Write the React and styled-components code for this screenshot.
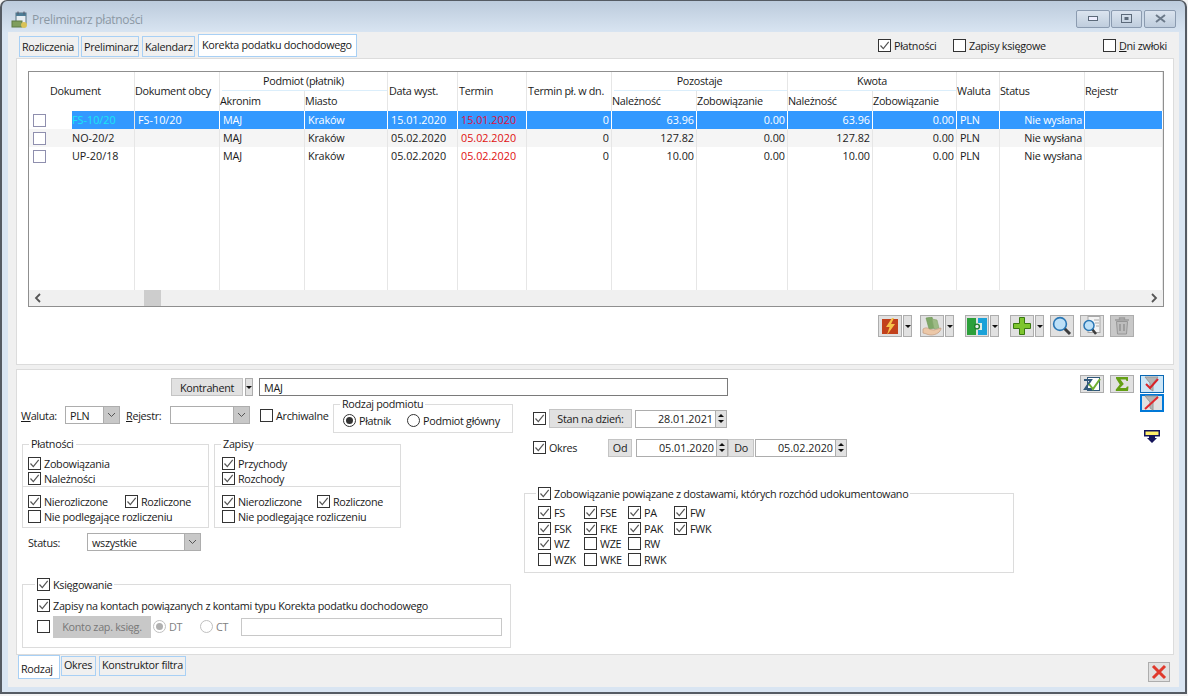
import React from 'react';
import styled, { createGlobalStyle } from 'styled-components';

const GlobalStyle = createGlobalStyle`
  html, body { margin: 0; padding: 0; background: #f3f3f3; }
  body { font-family: "Open Sans", "Noto Sans", sans-serif; font-size: 10.8px; letter-spacing: -0.3px; color: #1a1a1a; }
  * { box-sizing: border-box; }
`;

const Frame = styled.div`
  width: 1187px;
  height: 694px;
  padding: 0 6px 7px;
  background: linear-gradient(180deg, #bccbdc 0, #d9e5f2 32px, #d9e5f2 100%);
  border: 1px solid #555b63;
  border-width: 1px 2px 2px 2px;
  border-radius: 7px 7px 0 0;
  overflow: hidden;
`;
const TitleBar = styled.div`
  height: 31px;
  display: flex;
  align-items: center;
  padding: 6px 3px 0 3px;
  color: #8b98a4;
  font-size: 12px;
`;
const TitleText = styled.span`
  margin-left: 3px;
  flex: 1;
`;
const WinBtn = styled.div`
  width: ${p => p.$w}px;
  height: 18px;
  margin-left: ${p => p.$ml}px;
  margin-bottom: 2px;
  border: 1px solid #8b9bb0;
  border-radius: 2px;
  background: linear-gradient(180deg, #dbe4ef, #bfcddd);
  display: flex;
  align-items: center;
  justify-content: center;
`;
const Content = styled.div`
  height: 655px;
  background: #f0f0f0;
  padding: 2px 5px 0 8px;
  display: flex;
  flex-direction: column;
`;
const TopRow = styled.div`
  height: 24px;
  display: flex;
  align-items: flex-end;
  padding-left: 3px;
  padding-bottom: 1px;
`;
const Tab = styled.div`
  height: ${p => (p.$active ? 23 : 21)}px;
  width: ${p => p.$w}px;
  padding: ${p => (p.$active ? '0 0 3px 3px' : '0 0 0 2px')};
  margin-right: ${p => p.$mr ?? 2}px;
  border: 1px solid #a8d0f5;
  background: ${p => (p.$active ? '#fff' : '#f0f0f0')};
  display: flex;
  align-items: center;
  white-space: nowrap;
`;
const TopChecks = styled.div`
  margin-left: auto;
  align-self: flex-start;
  display: flex;
  height: 20px;
  padding-top: 4px;
`;
const Panel = styled.div`
  background: #fff;
  border: 1px solid #dcdcdc;
`;
const GridPanel = styled(Panel)`
  height: 307px;
  padding: 12px 9px 0 11px;
`;
const Table = styled.div`
  height: 236px;
  border: 1px solid #8f8f8f;
  display: grid;
  grid-template-columns: 106px 85px 85px 83px 70px 69px 85px 85px 91px 85px 84px 43px 85px 1fr;
  grid-template-rows: 19px 20px 18px 18px 18px 1fr 16px;
`;
const HeadCell = styled.div`
  grid-row: ${p => p.$row};
  grid-column: ${p => p.$col};
  border-right: 1px solid #e6e6e6;
  display: flex;
  align-items: center;
  padding: 0 0 2px ${p => p.$pad || 0}px;
  justify-content: ${p => (p.$center ? 'center' : 'flex-start')};
  white-space: nowrap;
  position: relative;
`;
const GroupHead = styled(HeadCell)`
  &::after {
    content: '';
    position: absolute;
    left: 2px;
    right: 0;
    bottom: 0;
    height: 1px;
    background: #dbeefb;
  }
`;
const Row = styled.div`
  display: contents;
`;
const Cell = styled.div`
  height: 18px;
  display: flex;
  align-items: center;
  justify-content: ${p => (p.$right ? 'flex-end' : 'flex-start')};
  padding: 0 2px 1px ${p => (p.$right ? 0 : 3)}px;
  border-right: 1px solid ${p => (p.$sel ? '#fff' : '#e6e6e6')};
  background: ${p => (p.$sel ? '#3399ff' : p.$alt ? '#f5f5f5' : '#fff')};
  color: ${p => p.$color || (p.$sel ? '#fff' : '#1a1a1a')};
  letter-spacing: ${p => (p.$num ? '0' : '-0.2px')};
  white-space: nowrap;
`;
const DocCell = styled.div`
  height: 18px;
  display: flex;
  align-items: center;
  padding-left: 4px;
  border-right: 1px solid #e6e6e6;
  background: ${p => (p.$alt ? '#f5f5f5' : '#fff')};
`;
const DocValue = styled.div`
  flex: 1;
  height: 18px;
  margin-left: 23px;
  padding-bottom: 1px;
  display: flex;
  align-items: center;
  letter-spacing: 0;
  background: ${p => (p.$sel ? '#3399ff' : 'transparent')};
  color: ${p => (p.$sel ? '#19e6f5' : '#1a1a1a')};
`;
const Filler = styled.div`
  border-right: 1px solid #e6e6e6;
`;
const ScrollBar = styled.div`
  grid-column: 1 / -1;
  background: #f0f0f0;
  display: flex;
  align-items: center;
  justify-content: space-between;
  padding: 0 5px 1px;
  position: relative;
`;
const Thumb = styled.div`
  position: absolute;
  left: 115px;
  top: 0;
  width: 17px;
  height: 16px;
  background: #cdcdcd;
`;
const Toolbar = styled.div`
  display: flex;
  justify-content: flex-end;
  padding: 8px 30px 0 0;
`;
const IconBtn = styled.div`
  width: 24px;
  height: ${p => p.$h || 22}px;
  border: 1px solid #adadad;
  background: ${p => (p.$off ? '#c8c8c8' : '#e1e1e1')};
  display: flex;
  align-items: center;
  justify-content: center;
  margin-left: ${p => p.$ml || 0}px;
`;
const ArrowBtn = styled.div`
  width: 9px;
  height: 22px;
  margin: 0 ${p => p.$mr || 0}px 0 1px;
  border: 1px solid #adadad;
  background: #e1e1e1;
  display: flex;
  align-items: center;
  justify-content: center;
  &::after {
    content: '';
    border: 3px solid transparent;
    border-top-color: #111;
    border-bottom: 0;
  }
`;
const FilterPanel = styled(Panel)`
  margin-top: 4px;
  height: 286px;
  display: flex;
`;
const FilterMain = styled.div`
  flex: 1;
  display: flex;
  flex-direction: column;
`;
const ContractorRow = styled.div`
  display: flex;
  align-items: center;
  padding: 8px 0 0 154px;
  width: 711px;
`;
const GrayBtn = styled.div`
  height: ${p => p.$h || 18}px;
  width: ${p => p.$w}px;
  flex: none;
  background: ${p => (p.$off ? '#c8c8c8' : '#e1e1e1')};
  color: ${p => (p.$off ? '#777' : '#1a1a1a')};
  border: 1px solid ${p => (p.$off ? '#c8c8c8' : '#c4c4c4')};
  display: flex;
  align-items: center;
  justify-content: center;
  white-space: nowrap;
`;
const SmallArrow = styled(ArrowBtn)`
  width: 8px;
  height: 18px;
  margin: 0 6px 0 2px;
`;
const TextBox = styled.div`
  height: ${p => p.$h || 18}px;
  flex: 1;
  border: 1px solid ${p => (p.$off ? '#c8c8c8' : '#7a7a7a')};
  padding-left: 4px;
  display: flex;
  align-items: center;
`;
const FilterCols = styled.div`
  display: flex;
`;
const LeftCol = styled.div`
  width: 507px;
  padding-left: 4px;
`;
const MidCol = styled.div`
  flex: 1;
  padding: 13px 0 0 0;
`;
const CurrencyRow = styled.div`
  height: 38px;
  display: flex;
  align-items: center;
`;
const FieldLabel = styled.span`
  width: ${p => p.$w}px;
  margin-left: ${p => p.$ml || 0}px;
  flex: none;
`;
const Under = styled.span`
  text-decoration: underline;
`;
const SelectBox = styled.div`
  width: ${p => p.$w}px;
  height: 18px;
  flex: none;
  border: 1px solid #adadad;
  padding-left: 4px;
  display: flex;
  align-items: center;
`;
const SelectArrow = styled.div`
  width: 16px;
  height: 16px;
  margin-left: auto;
  background: #c8c8c8;
  border-left: 1px solid #adadad;
  display: flex;
  align-items: center;
  justify-content: center;
`;
const Box = styled.fieldset`
  margin: ${p => p.$m || 0};
  padding: 0;
  border: 1px solid #dcdcdc;
  width: ${p => p.$w}px;
  height: ${p => p.$h}px;
  flex: none;
  min-width: 0;
  align-self: flex-start;
`;
const BoxLegend = styled.legend`
  padding: 0 2px;
  margin-left: ${p => p.$ml || 6}px;
  display: flex;
  align-items: center;
  line-height: 14px;
`;
const KindRow = styled.div`
  display: flex;
  padding: 2px 0 0 9px;
`;
const CheckLine = styled.label`
  display: inline-flex;
  align-items: center;
  height: ${p => p.$h || 15}px;
  width: ${p => (p.$w ? p.$w + 'px' : 'auto')};
  margin-left: ${p => p.$ml || 0}px;
  white-space: nowrap;
  flex: none;
  color: ${p => (p.$off ? '#808080' : 'inherit')};
`;
const CheckBox = styled.span`
  width: 13px;
  height: 13px;
  flex: none;
  border: 1px solid ${p => (p.$soft ? '#8f8fae' : '#333')};
  background: #fff;
  margin-right: 3px;
  display: flex;
  align-items: center;
  justify-content: center;
`;
const Radio = styled.span`
  width: 13px;
  height: 13px;
  flex: none;
  border-radius: 50%;
  border: 1px solid ${p => (p.$off ? '#c0c0c0' : '#333')};
  margin-right: 3px;
  display: flex;
  align-items: center;
  justify-content: center;
  &::after {
    content: '';
    width: 7px;
    height: 7px;
    border-radius: 50%;
    background: ${p => (p.$on ? (p.$off ? '#b0b0b0' : '#333') : 'transparent')};
  }
`;
const GroupsRow = styled.div`
  display: flex;
  gap: 5px;
  margin: 3px 0 0 1px;
`;
const BoxSection = styled.div`
  display: flex;
  flex-wrap: wrap;
  padding: ${p => p.$pad};
  border-bottom: ${p => (p.$line ? '1px solid #dcdcdc' : '0')};
`;
const StatusRow = styled.div`
  display: flex;
  align-items: center;
  margin-top: 5px;
  padding-left: 7px;
`;
const PostingRow = styled.div`
  display: flex;
  align-items: center;
  padding: ${p => p.$top || 0}px 0 0 14px;
  height: ${p => p.$h}px;
`;
const DateRow = styled.div`
  display: flex;
  align-items: center;
  height: 19px;
  margin-bottom: ${p => p.$mb || 0}px;
  padding-left: 9px;
`;
const DateField = styled.div`
  width: 92px;
  height: 18px;
  flex: none;
  margin: 0 ${p => p.$mr || 0}px 0 ${p => p.$ml || 0}px;
  border: 1px solid #adadad;
  display: flex;
  align-items: center;
  justify-content: flex-end;
  letter-spacing: 0;
`;
const Spinner = styled.div`
  width: 11px;
  height: 16px;
  margin: 0 0 0 2px;
  background: #e1e1e1;
  border-left: 1px solid #adadad;
  display: flex;
  flex-direction: column;
  align-items: center;
  justify-content: space-around;
  padding: 2px 0;
`;
const SpinUp = styled.i`
  border: 3px solid transparent;
  border-bottom-color: #111;
  border-top: 0;
`;
const SpinDown = styled.i`
  border: 3px solid transparent;
  border-top-color: #111;
  border-bottom: 0;
`;
const DocGrid = styled.div`
  display: grid;
  grid-template-columns: 46px 44px 46px 60px;
  grid-auto-rows: 15.6px;
  padding: 4px 0 0 13px;
`;
const SideTools = styled.div`
  width: 93px;
  flex: none;
  padding: 5px 0 0 0;
  display: grid;
  grid-template-columns: 24px 24px 24px;
  column-gap: 6px;
  grid-auto-rows: min-content;
`;
const ToolBtn = styled(IconBtn)`
  height: 18px;
  ${p => p.$blue && `border: 1px solid #0a68b4; background: #cde6f7;`}
  ${p => p.$focus && `border: 2px solid #0078d7; background: #e1e1e1; margin-top: 1px;`}
`;
const Marker = styled.div`
  grid-column: 3;
  margin-top: 18px;
  display: flex;
  justify-content: center;
`;
const BottomRow = styled.div`
  height: 32px;
  display: flex;
  align-items: flex-start;
  padding-left: 2px;
`;
const BottomTab = styled(Tab)`
  height: ${p => (p.$active ? 24 : 20)}px;
  margin-top: ${p => (p.$active ? 0 : 1)}px;
  padding: ${p => (p.$active ? '2px 0 0 2px' : '0 0 3px 2px')};
`;
const CloseBtn = styled(IconBtn)`
  margin: 7px 4px 0 auto;
  width: 22px;
  height: 20px;
  background: #e1e1e1;
`;

const columns = [
  ['Dokument', 1, 21],
  ['Dokument obcy', 2, 0],
  ['Data wyst.', 5, 1],
  ['Termin', 6, 1],
  ['Termin pł. w dn.', 7, 1],
  ['Waluta', 12, 0],
  ['Status', 13, 0],
  ['Rejestr', 14, 0],
];
const rows = [
  ['FS-10/20', 'FS-10/20', '15.01.2020', '63.96'],
  ['NO-20/2', '', '05.02.2020', '127.82'],
  ['UP-20/18', '', '05.02.2020', '10.00'],
];

const Tick = () => (
  <svg width="11" height="11" viewBox="0 0 11 11">
    <path d="M1.5 5.5 L4.3 8.6 L9.7 1.8" fill="none" stroke="#555" strokeWidth="1.2" />
  </svg>
);
const Check = ({ on, off, children, h, w, ml }) => (
  <CheckLine $h={h} $w={w} $ml={ml} $off={off}>
    <CheckBox>{on && <Tick />}</CheckBox>
    {children}
  </CheckLine>
);
const Chevron = () => (
  <svg width="9" height="6" viewBox="0 0 9 6">
    <path d="M1 1 L4.5 4.5 L8 1" fill="none" stroke="#555" strokeWidth="1" />
  </svg>
);
const Select = ({ w, children }) => (
  <SelectBox $w={w}>
    {children}
    <SelectArrow><Chevron /></SelectArrow>
  </SelectBox>
);
const DateBox = ({ value, ml, mr }) => (
  <DateField $ml={ml} $mr={mr}>
    {value}
    <Spinner><SpinUp /><SpinDown /></Spinner>
  </DateField>
);
const ScrollArrow = ({ d }) => (
  <svg width="8" height="10" viewBox="0 0 8 10">
    <path d={d} fill="none" stroke="#555" strokeWidth="1.8" />
  </svg>
);

const AppIcon = () => (
  <svg width="18" height="20" viewBox="0 0 18 20">
    <rect x="5" y="3" width="10" height="11" fill="#e8eef3" stroke="#56707f" />
    <rect x="5" y="3" width="10" height="3" fill="#4e7d96" />
    <path d="M7 1.5v3M13 1.5v3" stroke="#556" />
    <rect x="1" y="11" width="10" height="6" fill="#7f9e5d" stroke="#5f7a45" />
    <circle cx="13" cy="15" r="3" fill="#d9c257" />
  </svg>
);
const BoltIcon = () => (
  <svg width="16" height="17" viewBox="0 0 16 17">
    <rect x="0" y="1" width="16" height="15" fill="#c2411c" />
    <path d="M10 0 L4 9 H7.5 L5 17 L13 6 H9 L12 0 Z" fill="#f6c24a" />
  </svg>
);
const HandIcon = () => (
  <svg width="20" height="19" viewBox="0 0 20 19">
    <path d="M4 1 L10 0 L13 11 L7 12 Z" fill="#7fa868" stroke="#6d9556" strokeWidth=".6" />
    <path d="M10 2 L15 3 L17 11 L12 12 Z" fill="#9dbb85" stroke="#87a56f" strokeWidth=".6" />
    <path d="M1 12 C4 10 6 11 8 12.5 L12 13 L19 11 C19 15 14 18 9 18 C6 18 4 16.5 1 16 Z" fill="#ecc8a8" stroke="#c39a7b" strokeWidth=".7" />
  </svg>
);
const LinkIcon = () => (
  <svg width="20" height="17" viewBox="0 0 20 17">
    <rect x="0" y="0" width="9" height="17" fill="#2ca03a" />
    <rect x="11" y="0" width="9" height="17" fill="#1ba2d8" />
    <rect x="9" y="5" width="6" height="7" fill="#e1f0e4" />
    <circle cx="10" cy="8.5" r="2.4" fill="#eee" stroke="#1e7d2c" strokeWidth="1.4" />
  </svg>
);
const PlusIcon = () => (
  <svg width="18" height="18" viewBox="0 0 18 18">
    <path d="M6.5 .5 H11.5 V6.5 H17.5 V11.5 H11.5 V17.5 H6.5 V11.5 H.5 V6.5 H6.5 Z" fill="#7dc52e" stroke="#38780f" />
  </svg>
);
const LensIcon = () => (
  <svg width="20" height="20" viewBox="0 0 20 20">
    <path d="M12.5 12.5 L18 18" stroke="#3d3d3d" strokeWidth="3" />
    <circle cx="8" cy="8" r="6.4" fill="#bde0f7" stroke="#2a77b5" strokeWidth="1.6" />
  </svg>
);
const LensDocIcon = () => (
  <svg width="20" height="20" viewBox="0 0 20 20">
    <rect x="6" y="0.5" width="12" height="16" fill="#f4f4f4" stroke="#a8a8a8" />
    <path d="M12 4h5M13 7h4M14 10h3" stroke="#aaa" />
    <path d="M10 13 L14 18" stroke="#3d3d3d" strokeWidth="2.6" />
    <circle cx="7" cy="9.5" r="5" fill="#bde0f7" stroke="#2a77b5" strokeWidth="1.5" />
  </svg>
);
const TrashIcon = () => (
  <svg width="16" height="18" viewBox="0 0 16 18">
    <path d="M1 3 H15 M5.5 3 V1 H10.5 V3" fill="none" stroke="#9a9a9a" strokeWidth="1.3" />
    <path d="M2.5 4.5 H13.5 L12.5 17 H3.5 Z" fill="#bdbdbd" stroke="#969696" />
    <path d="M6 7v7M10 7v7" stroke="#969696" strokeWidth="1.6" />
  </svg>
);
const ZCheckIcon = () => (
  <svg width="18" height="14" viewBox="0 0 18 14">
    <rect x="4.5" y=".5" width="12" height="13" fill="#fff" stroke="#31587a" />
    <path d="M1 3 H8 L2 12 H9" fill="none" stroke="#31587a" strokeWidth="2" />
    <path d="M6 7 L10 12 L17 2" fill="none" stroke="#6fae32" strokeWidth="2" />
  </svg>
);
const SigmaIcon = () => (
  <svg width="14" height="14" viewBox="0 0 14 14">
    <path d="M1 0 H13 V4 H11.5 L10.8 2.5 H5.5 L8.8 7 L5 11 H11 L12 9.5 H13.5 L13 14 H.8 V12.5 L4.8 7.6 L1 1.5 Z" fill="#64a014" />
  </svg>
);
const FunnelIcon = ({ slash }) => (
  <svg width="18" height="16" viewBox="0 0 18 16">
    <path d="M2 1 H15 L10 7 V15 L7 13 V7 Z" fill="#b4b4b4" stroke="#9a9a9a" />
    {slash
      ? <path d="M2 14 L15 2" stroke="#e0282e" strokeWidth="2" />
      : <path d="M3 8 L7 12 L15 3" fill="none" stroke="#d8232a" strokeWidth="2" />}
  </svg>
);
const MarkerIcon = () => (
  <svg width="16" height="13" viewBox="0 0 16 13">
    <rect x=".75" y=".75" width="14.5" height="5" fill="#ffef6a" stroke="#14145a" strokeWidth="1.5" />
    <path d="M5 5 H11 V8 H13 L8 13 L3 8 H5 Z" fill="#14145a" />
  </svg>
);
const CloseIcon = () => (
  <svg width="16" height="16" viewBox="0 0 16 16">
    <path d="M2 2 L14 14 M14 2 L2 14" stroke="#e0392c" strokeWidth="3" />
  </svg>
);

export default function App() {
  return (
    <>
      <GlobalStyle />
      <Frame>
        <TitleBar>
          <AppIcon />
          <TitleText>Preliminarz płatności</TitleText>
          <WinBtn $w={34} $ml={0}><svg width="10" height="5"><rect x=".5" y=".5" width="9" height="4" fill="#eef" stroke="#5c6a7a" /></svg></WinBtn>
          <WinBtn $w={31} $ml={1}><svg width="11" height="9"><rect x=".5" y=".5" width="10" height="8" fill="none" stroke="#5c6a7a" /><rect x="3.5" y="3" width="4" height="3" fill="#5c6a7a" /></svg></WinBtn>
          <WinBtn $w={32} $ml={2}><svg width="11" height="9"><path d="M1 1 L10 8 M10 1 L1 8" stroke="#6c7a8a" strokeWidth="2" /></svg></WinBtn>
        </TitleBar>
        <Content>
          <TopRow>
            <Tab $w={60}>Rozliczenia</Tab>
            <Tab $w={58} $mr={3}>Preliminarz</Tab>
            <Tab $w={53} $mr={3}>Kalendarz</Tab>
            <Tab $w={159} $active>Korekta podatku dochodowego</Tab>
            <TopChecks>
              <Check on w={75}>Płatności</Check>
              <Check w={150}>Zapisy księgowe</Check>
              <Check w={71}><Under>D</Under>ni zwłoki</Check>
            </TopChecks>
          </TopRow>
          <GridPanel>
            <Table>
              {columns.map(c => (
                <HeadCell key={c[0]} $row="1 / span 2" $col={c[1]} $pad={c[2]}>{c[0]}</HeadCell>
              ))}
              <GroupHead $row={1} $col="3 / span 2" $center>Podmiot (płatnik)</GroupHead>
              <GroupHead $row={1} $col="8 / span 2" $center>Pozostaje</GroupHead>
              <GroupHead $row={1} $col="10 / span 2" $center>Kwota</GroupHead>
              <HeadCell $row={2} $col={3}>Akronim</HeadCell>
              <HeadCell $row={2} $col={4}>Miasto</HeadCell>
              <HeadCell $row={2} $col={8}>Należność</HeadCell>
              <HeadCell $row={2} $col={9}>Zobowiązanie</HeadCell>
              <HeadCell $row={2} $col={10}>Należność</HeadCell>
              <HeadCell $row={2} $col={11}>Zobowiązanie</HeadCell>
              {rows.map((r, i) => {
                const sel = i === 0;
                const alt = i === 1;
                const p = { $sel: sel, $alt: alt };
                return (
                  <Row key={r[0]}>
                    <DocCell $alt={alt}>
                      <CheckBox $soft />
                      <DocValue $sel={sel}>{r[0]}</DocValue>
                    </DocCell>
                    <Cell {...p} $num>{r[1]}</Cell>
                    <Cell {...p}>MAJ</Cell>
                    <Cell {...p}>Kraków</Cell>
                    <Cell {...p} $num>{r[2]}</Cell>
                    <Cell {...p} $num $color={sel ? '#e0103c' : '#e01010'}>{r[2]}</Cell>
                    <Cell {...p} $num $right>0</Cell>
                    <Cell {...p} $num $right>{r[3]}</Cell>
                    <Cell {...p} $num $right>0.00</Cell>
                    <Cell {...p} $num $right>{r[3]}</Cell>
                    <Cell {...p} $num $right>0.00</Cell>
                    <Cell {...p}>PLN</Cell>
                    <Cell {...p} $right>Nie wysłana</Cell>
                    <Cell {...p} />
                  </Row>
                );
              })}
              {Array.from({ length: 14 }, (_, i) => <Filler key={i} />)}
              <ScrollBar>
                <ScrollArrow d="M6 1 L2 5 L6 9" />
                <Thumb />
                <ScrollArrow d="M2 1 L6 5 L2 9" />
              </ScrollBar>
            </Table>
            <Toolbar>
              <IconBtn><BoltIcon /></IconBtn><ArrowBtn $mr={8} />
              <IconBtn><HandIcon /></IconBtn><ArrowBtn $mr={11} />
              <IconBtn><LinkIcon /></IconBtn><ArrowBtn $mr={11} />
              <IconBtn><PlusIcon /></IconBtn><ArrowBtn $mr={6} />
              <IconBtn><LensIcon /></IconBtn>
              <IconBtn $ml={6}><LensDocIcon /></IconBtn>
              <IconBtn $ml={6} $off><TrashIcon /></IconBtn>
            </Toolbar>
          </GridPanel>
          <FilterPanel>
            <FilterMain>
              <ContractorRow>
                <GrayBtn $w={72}>Kontrahent</GrayBtn>
                <SmallArrow />
                <TextBox>MAJ</TextBox>
              </ContractorRow>
              <FilterCols>
                <LeftCol>
                  <CurrencyRow>
                    <FieldLabel $w={44}><Under>W</Under>aluta:</FieldLabel>
                    <Select w={55}>PLN</Select>
                    <FieldLabel $w={44} $ml={6}><Under>R</Under>ejestr:</FieldLabel>
                    <Select w={80}></Select>
                    <Check ml={10} w={73}>Archiwalne</Check>
                    <Box $w={180} $h={36} $m="1px 0 0 0">
                      <BoxLegend>Rodzaj podmiotu</BoxLegend>
                      <KindRow>
                        <CheckLine $w={64}><Radio $on />Płatnik</CheckLine>
                        <CheckLine><Radio />Podmiot główny</CheckLine>
                      </KindRow>
                    </Box>
                  </CurrencyRow>
                  <GroupsRow>
                    <Box $w={187} $h={91}>
                      <BoxLegend>Płatności</BoxLegend>
                      <BoxSection $line $pad="5px 0 0 5px">
                        <Check on w={180}>Zobowiązania</Check>
                        <Check on w={180}>Należności</Check>
                      </BoxSection>
                      <BoxSection $pad="7px 0 0 5px">
                        <Check on w={97}>Nierozliczone</Check>
                        <Check on w={80}>Rozliczone</Check>
                        <Check w={180}>Nie podlegające rozliczeniu</Check>
                      </BoxSection>
                    </Box>
                    <Box $w={187} $h={91}>
                      <BoxLegend>Zapisy</BoxLegend>
                      <BoxSection $line $pad="5px 0 0 7px">
                        <Check on w={175}>Przychody</Check>
                        <Check on w={175}>Rozchody</Check>
                      </BoxSection>
                      <BoxSection $pad="7px 0 0 7px">
                        <Check on w={95}>Nierozliczone</Check>
                        <Check on w={80}>Rozliczone</Check>
                        <Check w={175}>Nie podlegające rozliczeniu</Check>
                      </BoxSection>
                    </Box>
                  </GroupsRow>
                  <StatusRow>
                    <FieldLabel $w={59}>Status:</FieldLabel>
                    <Select w={114}>wszystkie</Select>
                  </StatusRow>
                  <Box $w={489} $h={71} $m="26px 0 0 1px">
                    <BoxLegend $ml={12}><Check on>Księgowanie</Check></BoxLegend>
                    <PostingRow $h={23} $top={4}>
                      <Check on>Zapisy na kontach powiązanych z kontami typu Korekta podatku dochodowego</Check>
                    </PostingRow>
                    <PostingRow $h={23}>
                      <CheckBox />
                      <GrayBtn $off $w={98} $h={22}>Konto zap. księg.</GrayBtn>
                      <CheckLine $off $w={47} $ml={2}><Radio $on $off />DT</CheckLine>
                      <CheckLine $off $w={41}><Radio $off />CT</CheckLine>
                      <TextBox $off />
                      <FieldLabel $w={8} />
                    </PostingRow>
                  </Box>
                </LeftCol>
                <MidCol>
                  <DateRow $mb={10}>
                    <CheckBox><Tick /></CheckBox>
                    <GrayBtn $w={83} $h={19}>Stan na dzień:</GrayBtn>
                    <DateBox value="28.01.2021" ml={3} />
                  </DateRow>
                  <DateRow>
                    <Check on w={75}>Okres</Check>
                    <GrayBtn $w={24}>Od</GrayBtn>
                    <DateBox value="05.01.2020" ml={4} />
                    <GrayBtn $w={26} $h={18}>Do</GrayBtn>
                    <DateBox value="05.02.2020" ml={1} />
                  </DateRow>
                  <Box $w={490} $h={87} $m="29px 0 0 0">
                    <BoxLegend $ml={11}><Check on>Zobowiązanie powiązane z dostawami, których rozchód udokumentowano</Check></BoxLegend>
                    <DocGrid>
                      <Check on>FS</Check><Check on>FSE</Check><Check on>PA</Check><Check on>FW</Check>
                      <Check on>FSK</Check><Check on>FKE</Check><Check on>PAK</Check><Check on>FWK</Check>
                      <Check on>WZ</Check><Check>WZE</Check><Check>RW</Check><span />
                      <Check>WZK</Check><Check>WKE</Check><Check>RWK</Check>
                    </DocGrid>
                  </Box>
                </MidCol>
              </FilterCols>
            </FilterMain>
            <SideTools>
              <ToolBtn><ZCheckIcon /></ToolBtn>
              <ToolBtn><SigmaIcon /></ToolBtn>
              <ToolBtn $blue><FunnelIcon /></ToolBtn>
              <span /><span />
              <ToolBtn $focus><FunnelIcon slash /></ToolBtn>
              <Marker><MarkerIcon /></Marker>
            </SideTools>
          </FilterPanel>
          <BottomRow>
            <BottomTab $active $w={42} $mr={1}>Rodzaj</BottomTab>
            <BottomTab $w={35} $mr={3}>Okres</BottomTab>
            <BottomTab $w={87}>Konstruktor filtra</BottomTab>
            <CloseBtn><CloseIcon /></CloseBtn>
          </BottomRow>
        </Content>
      </Frame>
    </>
  );
}
